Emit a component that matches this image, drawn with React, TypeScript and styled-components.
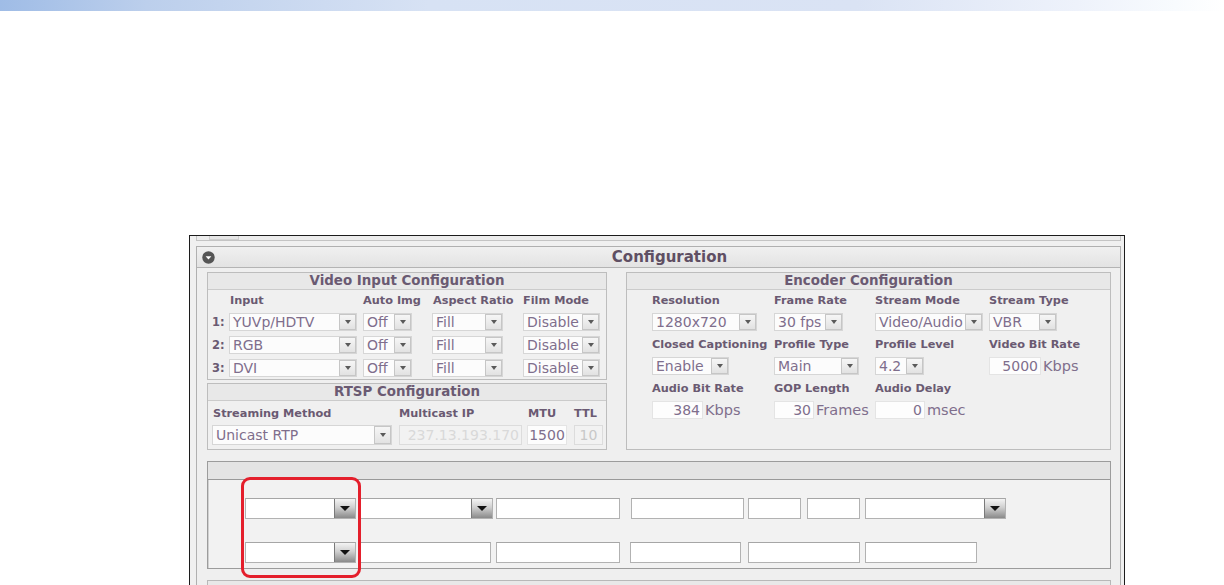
import React from "react";
import styled, { createGlobalStyle } from "styled-components";

const GlobalStyle = createGlobalStyle`
    html, body {
        margin: 0;
        padding: 0;
        background: #ffffff;
    }
    body {
        font-family: "DejaVu Sans", Verdana, sans-serif;
        overflow: hidden;
    }
`;

const LABEL = "#6a5a72";
const VALUE = "#7f6e8c";

const Page = styled.div`
    width: 1224px;
    height: 585px;
    overflow: hidden;
    display: flex;
    flex-direction: column;
`;

const TopBand = styled.div`
    flex-shrink: 0;
    height: 11px;
    background: linear-gradient(
        90deg,
        #9fbce6 0%,
        #bccfec 12%,
        #d7e2f4 35%,
        #dae3f4 70%,
        #eef2fb 88%,
        #f8fbfe 96%,
        #ffffff 100%
    );
`;

const Frame = styled.div`
    flex-shrink: 0;
    margin: 224px 0 0 189px;
    width: 936px;
    height: 360px;
    box-sizing: border-box;
    border: 1px solid #1c1c1c;
    background: #f0f0f0;
    overflow: hidden;
    display: flex;
    flex-direction: column;
    & > * {
        flex-shrink: 0;
    }
`;

const PrevStub = styled.div`
    height: 4px;
    margin: 0 3px 0 6px;
    border: 1px solid #c4c4c4;
    border-top: none;
    background: #ececec;
    display: flex;
    padding-left: 12px;
`;

const StubTab = styled.div`
    width: 28px;
    border: 1px solid #cfcfcf;
    border-top: none;
    background: #e6e6e6;
`;

const Panel = styled.div`
    margin: 5px 3px 0 6px;
    border: 1px solid #b0b0b0;
    background: #efefef;
    display: flex;
    flex-direction: column;
`;

const PanelHeader = styled.div`
    height: 21px;
    box-sizing: border-box;
    border-bottom: 1px solid #b4b4b4;
    background: linear-gradient(#f0f0f0, #e3e3e3);
    display: flex;
    align-items: center;
    padding-left: 5px;
`;

const PanelTitle = styled.div`
    flex: 1;
    text-align: center;
    padding-left: 4px;
    font-size: 15px;
    font-weight: bold;
    color: #5f4f63;
`;

const PanelBody = styled.div`
    padding: 4px 9px 0 10px;
    display: flex;
    flex-direction: column;
    gap: 11px;
`;

const TopGrid = styled.div`
    display: grid;
    grid-template-columns: 400px 1fr;
    column-gap: 19px;
`;

const LeftCol = styled.div`
    display: flex;
    flex-direction: column;
    gap: 3px;
`;

const Box = styled.div`
    border: 1px solid #bdbdbd;
    background: #f0f0f0;
    display: flex;
    flex-direction: column;
`;

const BoxHeader = styled.div`
    height: 17px;
    box-sizing: border-box;
    border-bottom: 1px solid #cbcbcb;
    background: #e8e8e8;
    text-align: center;
    font-size: 13.4px;
    line-height: 16px;
    font-weight: bold;
    color: ${LABEL};
`;

const Label = styled.div<{ $pad?: number }>`
    height: 14px;
    line-height: 14px;
    font-size: 11.3px;
    font-weight: bold;
    color: ${LABEL};
    white-space: nowrap;
    padding-left: ${(p) => p.$pad ?? 0}px;
`;

const VideoGrid = styled.div`
    display: grid;
    grid-template-columns: 21px 134px 69px 91px 1fr;
    grid-template-rows: 14px 18px 18px 18px;
    row-gap: 5px;
    padding: 4px 0 2px 0;
    & > :nth-child(-n + 5) {
        margin-bottom: 1px;
    }
`;

const RowNum = styled.div`
    font-size: 11.5px;
    font-weight: bold;
    color: ${LABEL};
    line-height: 18px;
    padding-left: 4px;
`;

const RtspGrid = styled.div`
    display: grid;
    grid-template-columns: 187px 128px 47px 1fr;
    grid-template-rows: 14px 20px;
    row-gap: 4px;
    padding: 6px 0 4px 4px;
`;

const EncGrid = styled.div`
    display: grid;
    grid-template-columns: 122px 101px 114px 1fr;
    row-gap: 7px;
    padding: 4px 0 0 25px;
`;

const Field = styled.div`
    display: flex;
    flex-direction: column;
    gap: 5px;
`;

const Sel = styled.div<{ $w: number; $h?: number }>`
    width: ${(p) => p.$w}px;
    height: ${(p) => p.$h ?? 18}px;
    box-sizing: border-box;
    border: 1px solid #d6d6d6;
    background: #fcfcfc;
    display: flex;
    align-items: center;
    font-size: 14px;
    color: ${VALUE};
`;

const SelText = styled.span`
    flex: 1;
    padding-left: 3px;
    white-space: nowrap;
    overflow: hidden;
`;

const SelArrow = styled.span`
    flex-shrink: 0;
    width: 17px;
    height: 100%;
    box-sizing: border-box;
    border: 1px solid #c6c6c6;
    background: linear-gradient(#f6f6f6, #e2e2e2);
    display: flex;
    align-items: center;
    justify-content: center;
    &::after {
        content: "";
        border-left: 3.5px solid transparent;
        border-right: 3.5px solid transparent;
        border-top: 4px solid #5a5a5a;
    }
`;

const NumRow = styled.div`
    display: flex;
    align-items: center;
    height: 18px;
`;

const NumBox = styled.div<{ $w: number; $h?: number; $align?: string; $disabled?: boolean }>`
    width: ${(p) => p.$w}px;
    height: ${(p) => p.$h ?? 18}px;
    box-sizing: border-box;
    border: 1px solid ${(p) => (p.$disabled ? "#dcdcdc" : "#e4e4e4")};
    background: ${(p) => (p.$disabled ? "#f2f2f2" : "#fdfdfd")};
    color: ${(p) => (p.$disabled ? "#d9d9d9" : VALUE)};
    font-size: 14px;
    line-height: ${(p) => (p.$h ?? 18) - 2}px;
    text-align: ${(p) => p.$align ?? "right"};
    padding: 0 ${(p) => (p.$align === "center" ? 0 : 2)}px;
    white-space: nowrap;
    overflow: hidden;
`;

const Unit = styled.span`
    margin-left: 2px;
    font-size: 14.5px;
    color: ${VALUE};
`;

const SubPanel = styled.div`
    position: relative;
    height: 108px;
    box-sizing: border-box;
    border: 1px solid #9c9c9c;
    box-shadow: inset 1px 1px 0 #d0d0d0;
    background: #f2f2f2;
    display: flex;
    flex-direction: column;
`;

const SubHeader = styled.div`
    height: 18px;
    box-sizing: border-box;
    border-bottom: 1px solid #999999;
    background: #e4e4e4;
`;

const SubBody = styled.div`
    padding: 18px 0 0 37px;
    display: flex;
    flex-direction: column;
    gap: 23px;
`;

const JRow = styled.div`
    display: flex;
    height: 21px;
`;

const JField = styled.div<{ $w: number; $ml: number }>`
    width: ${(p) => p.$w}px;
    margin-left: ${(p) => p.$ml}px;
    height: 21px;
    box-sizing: border-box;
    border: 1px solid #b2b2b2;
    border-top-color: #a6a6a6;
    background: #ffffff;
    display: flex;
    justify-content: flex-end;
`;

const JArrow = styled.div`
    width: 21px;
    height: 100%;
    box-sizing: border-box;
    border-left: 1px solid #7a7a7a;
    background: linear-gradient(#f4f4f4 0%, #cfcfcf 45%, #8a8a8a 100%);
    display: flex;
    align-items: center;
    justify-content: center;
    &::after {
        content: "";
        border-left: 5px solid transparent;
        border-right: 5px solid transparent;
        border-top: 5px solid #111111;
    }
`;

const Highlight = styled.div`
    position: absolute;
    left: 33px;
    top: 15px;
    width: 120px;
    height: 101px;
    box-sizing: border-box;
    border: 3px solid #e41f2c;
    border-radius: 9px;
    pointer-events: none;
`;

const NextPanel = styled.div`
    height: 40px;
    border: 1px solid #b8b8b8;
    background: #e8e8e8;
`;

function CollapseIcon() {
    return (
        <svg width="13" height="13" viewBox="0 0 13 13">
            <circle cx="6.5" cy="6.5" r="6.2" fill="#555555" />
            <path d="M3.6 5.2 L9.4 5.2 L6.5 8.4 Z" fill="#ffffff" />
        </svg>
    );
}

type SelectProps = { w: number; h?: number; value: string };

function Select({ w, h, value }: SelectProps) {
    return (
        <Sel $w={w} $h={h}>
            <SelText>{value}</SelText>
            <SelArrow />
        </Sel>
    );
}

const videoRows = [
    ["1:", "YUVp/HDTV"],
    ["2:", "RGB"],
    ["3:", "DVI"],
];

// bottom panel fields: width, left margin, has drop-down
const javaRows: [number, number, boolean][][] = [
    [
        [111, 0, true],
        [133, 4, true],
        [124, 3, false],
        [113, 11, false],
        [53, 4, false],
        [53, 6, false],
        [141, 5, true],
    ],
    [
        [111, 0, true],
        [131, 4, false],
        [124, 5, false],
        [111, 10, false],
        [112, 7, false],
        [112, 5, false],
    ],
];

export default function App() {
    return (
        <>
            <GlobalStyle />
            <Page>
                <TopBand />
                <Frame>
                    <PrevStub>
                        <StubTab />
                    </PrevStub>
                    <Panel>
                        <PanelHeader>
                            <CollapseIcon />
                            <PanelTitle>Configuration</PanelTitle>
                        </PanelHeader>
                        <PanelBody>
                            <TopGrid>
                                <LeftCol>
                                    <Box>
                                        <BoxHeader>Video Input Configuration</BoxHeader>
                                        <VideoGrid>
                                            <span />
                                            <Label $pad={1}>Input</Label>
                                            <Label>Auto Img</Label>
                                            <Label $pad={1}>Aspect Ratio</Label>
                                            <Label>Film Mode</Label>
                                            {videoRows.map(([num, input]) => (
                                                <React.Fragment key={num}>
                                                    <RowNum>{num}</RowNum>
                                                    <Select w={128} value={input} />
                                                    <Select w={49} value="Off" />
                                                    <Select w={71} value="Fill" />
                                                    <Select w={77} value="Disable" />
                                                </React.Fragment>
                                            ))}
                                        </VideoGrid>
                                    </Box>
                                    <Box>
                                        <BoxHeader>RTSP Configuration</BoxHeader>
                                        <RtspGrid>
                                            <Label $pad={1}>Streaming Method</Label>
                                            <Label>Multicast IP</Label>
                                            <Label $pad={1}>MTU</Label>
                                            <Label>TTL</Label>
                                            <Select w={180} h={20} value="Unicast RTP" />
                                            <NumBox $w={123} $h={20} $align="right" $disabled>
                                                237.13.193.170
                                            </NumBox>
                                            <NumBox $w={40} $h={20} $align="center">
                                                1500
                                            </NumBox>
                                            <NumBox $w={29} $h={20} $align="center" $disabled>
                                                <span style={{ color: "#c8c8c8" }}>10</span>
                                            </NumBox>
                                        </RtspGrid>
                                    </Box>
                                </LeftCol>
                                <Box>
                                    <BoxHeader>Encoder Configuration</BoxHeader>
                                    <EncGrid>
                                        <Field>
                                            <Label>Resolution</Label>
                                            <Select w={105} value="1280x720" />
                                        </Field>
                                        <Field>
                                            <Label>Frame Rate</Label>
                                            <Select w={69} value="30 fps" />
                                        </Field>
                                        <Field>
                                            <Label>Stream Mode</Label>
                                            <Select w={108} value="Video/Audio" />
                                        </Field>
                                        <Field>
                                            <Label>Stream Type</Label>
                                            <Select w={68} value="VBR" />
                                        </Field>
                                        <Field>
                                            <Label>Closed Captioning</Label>
                                            <Select w={77} value="Enable" />
                                        </Field>
                                        <Field>
                                            <Label>Profile Type</Label>
                                            <Select w={85} value="Main" />
                                        </Field>
                                        <Field>
                                            <Label>Profile Level</Label>
                                            <Select w={49} value="4.2" />
                                        </Field>
                                        <Field>
                                            <Label>Video Bit Rate</Label>
                                            <NumRow>
                                                <NumBox $w={52}>5000</NumBox>
                                                <Unit>Kbps</Unit>
                                            </NumRow>
                                        </Field>
                                        <Field>
                                            <Label>Audio Bit Rate</Label>
                                            <NumRow>
                                                <NumBox $w={51}>384</NumBox>
                                                <Unit>Kbps</Unit>
                                            </NumRow>
                                        </Field>
                                        <Field>
                                            <Label>GOP Length</Label>
                                            <NumRow>
                                                <NumBox $w={40}>30</NumBox>
                                                <Unit>Frames</Unit>
                                            </NumRow>
                                        </Field>
                                        <Field>
                                            <Label>Audio Delay</Label>
                                            <NumRow>
                                                <NumBox $w={50}>0</NumBox>
                                                <Unit>msec</Unit>
                                            </NumRow>
                                        </Field>
                                    </EncGrid>
                                </Box>
                            </TopGrid>
                            <SubPanel>
                                <SubHeader />
                                <SubBody>
                                    {javaRows.map((row, ri) => (
                                        <JRow key={ri}>
                                            {row.map(([w, ml, drop], i) => (
                                                <JField key={i} $w={w} $ml={ml}>
                                                    {drop && <JArrow />}
                                                </JField>
                                            ))}
                                        </JRow>
                                    ))}
                                </SubBody>
                                <Highlight />
                            </SubPanel>
                            <NextPanel />
                        </PanelBody>
                    </Panel>
                </Frame>
            </Page>
        </>
    );
}
